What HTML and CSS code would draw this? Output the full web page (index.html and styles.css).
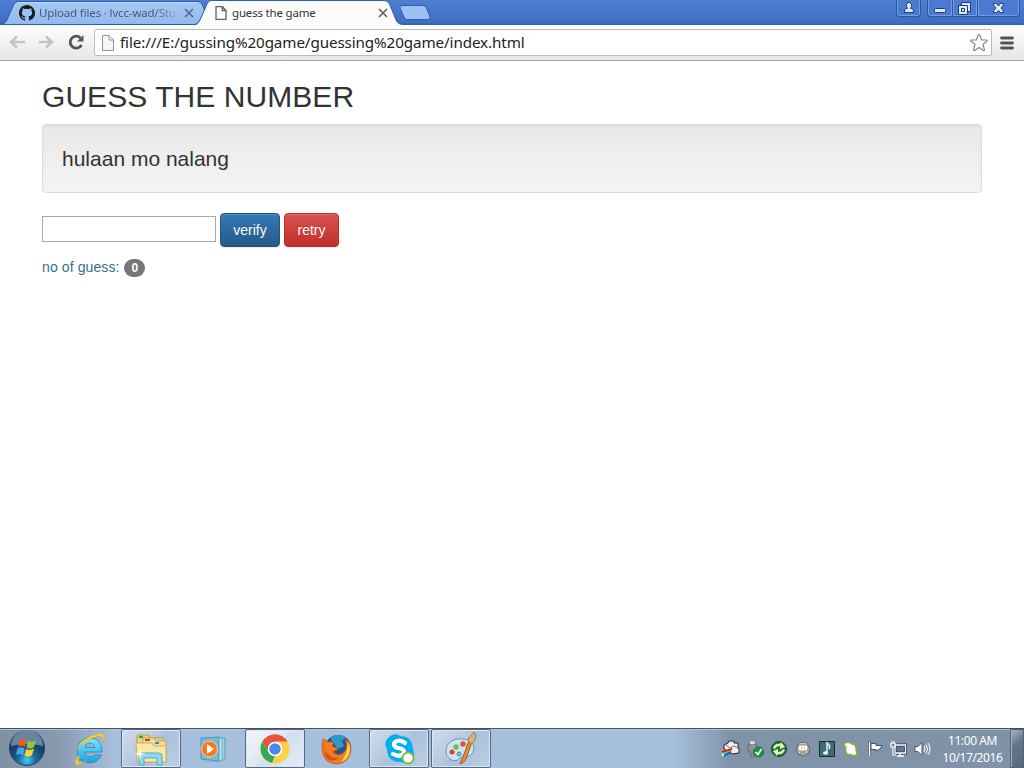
FILE: index.html
```html
<!DOCTYPE html>
<html lang="en">
<head>
<meta charset="utf-8">
<title>guess the game</title>
<link rel="stylesheet" href="styles.css">
</head>
<body>
<div class="desktop">
  <header class="tabstrip">
    <div class="tab tab-back">
      <svg class="tab-shape" width="208" height="25" viewBox="0 0 208 25"><defs><linearGradient id="tb" x2="0" y2="1"><stop stop-color="#a5c8f5"/><stop offset="1" stop-color="#92b9ed"/></linearGradient></defs><path d="M-3 24.500Q1 24 3 20L10 4Q11.500 1.500 14 1.500H194Q197 1.500 198 4L205 21Q206 24 208 24.500Z" fill="url(#tb)" stroke="#315ca9"/><path d="M14 2.500H194" stroke="#bfd9fa"/></svg>
      <svg class="favicon" width="16" height="16" viewBox="0 0 16 16"><path fill="#191b20" d="M8 0C3.580 0 0 3.580 0 8c0 3.540 2.290 6.530 5.470 7.590.4.070.55-.17.55-.38v-1.490c-2.230.48-2.700-.94-2.700-.94-.36-.92-.89-1.170-.89-1.170-.73-.5.050-.49.050-.49.810.060 1.230.83 1.230.83.710 1.230 1.870.87 2.330.66.070-.52.280-.87.500-1.070-1.780-.2-3.640-.89-3.640-3.950 0-.87.310-1.590.82-2.150-.08-.2-.36-1.020.08-2.120 0 0 .67-.21 2.200.82a7.600 7.600 0 0 1 4 0c1.530-1.040 2.200-.82 2.200-.82.440 1.100.16 1.920.08 2.120.51.560.82 1.270.82 2.150 0 3.070-1.870 3.750-3.650 3.950.29.250.54.730.54 1.480v2.200c0 .21.150.46.550.38A8 8 0 0 0 8 0Z"/></svg>
      <span class="tab-title faded">Upload files · lvcc-wad/Stu</span>
      <svg class="tab-close" width="10" height="10" viewBox="0 0 10 10"><path d="M1 1l8 8M9 1l-8 8" stroke="#586b89" stroke-width="1.700"/></svg>
    </div>
    <div class="tab tab-front">
      <svg class="tab-shape" width="206" height="26" viewBox="0 0 206 26"><path d="M-3 25.500Q1 24 2.500 20L9 4Q10.500.5 13 .5H186Q190 .5 191.500 4L198 20Q200 24.500 205 24.500V26H-3Z" fill="#fcfcfc"/><path d="M-3 24.500Q1 23 2.500 19L9 4Q10.500.5 13 .5H186Q190 .5 191.500 4L198 20Q200 24.500 205 24.500" fill="none" stroke="#315daf"/></svg>
      <svg class="page-icon" width="12" height="14" viewBox="0 0 12 14"><path d="M1 .7h6.500L11 4.500v8.800H1ZM7.300.7v4H11" fill="#fff" stroke="#606060" stroke-width="1.300"/></svg>
      <span class="tab-title front-title">guess the game</span>
      <svg class="tab-close" width="10" height="10" viewBox="0 0 10 10"><path d="M1 1l8 8M9 1l-8 8" stroke="#606060" stroke-width="1.700"/></svg>
    </div>
    <svg class="new-tab" width="32" height="17" viewBox="0 0 32 17"><path d="M3 1.500H24Q26.500 1.500 27.500 4L31 13Q31.500 15.500 29 15.500H8Q6 15.500 5 13L1 4Q0 1.500 3 1.500Z" fill="#9cc0f2" stroke="#315db0"/></svg>
    <svg class="window-buttons" width="126" height="18" viewBox="0 0 126 18">
      <g fill="#4b7bd0" stroke="#2c559f"><path d="M.5 0V14Q.5 16.500 3 16.500H22Q24.500 16.500 24.500 14V0"/><path d="M31.500 0V14Q31.500 16.500 34 16.500H120Q123.500 16.500 123.500 14V0M56.500 0V16M81.500 0V16"/></g>
      <g fill="none" stroke="#739ce1"><path d="M1.500 0V14L3 15.500H22L23.500 14V0M32.500 0V14L34 15.500H55.500V0M57.500 0V15.500H80.500V0M82.500 0V15.500H120L122.500 14V0"/></g>
      <g fill="#dbe8fc" stroke="#213d73"><path d="M10.500 6.500V4.500L12 2.500H14L15.500 4.500V6.500L14.500 8.500H15.500L17.500 10V12.500H8.500V10L10.500 8.500H11.500Z"/><rect x="38.500" y="8.500" width="11" height="4" rx="1"/><path d="M65.500 2.500H74.500V11.500H65.500Z"/><path fill-rule="evenodd" d="M62.500 5.500H71.500V14.500H62.500ZM65.500 8.500V11.500H68.500V8.500Z"/><path d="M97.500 3.500H100.500L102.500 6 104.500 3.500H107.500V5L105 8 107.500 11V12.500H104.500L102.500 10.500 100.500 12.500H97.500V11L100 8 97.500 5Z"/></g>
    </svg>
  </header>
  <nav class="toolbar">
    <svg class="nav-icons" width="77" height="20" viewBox="0 0 77 20"><g fill="none" stroke="#c3c3c3" stroke-width="2.500"><path d="M9 4.500L3 10L9 15.500M3 10H17"/><path d="M38 4.500L44 10L38 15.500M44 10H31"/></g><path d="M73.500 13A6 6 0 1 1 72.500 6" fill="none" stroke="#555" stroke-width="2.800"/><path d="M75.500 3V9.500H69Z" fill="#555"/></svg>
    <div class="address">
      <svg width="12" height="16" viewBox="0 0 12 16"><path d="M.5.5H7L11.500 5V15.500H.5ZM7 .5V5H11.500" fill="#f6f6f6" stroke="#929292"/></svg>
      <span class="url">file:///E:/gussing%20game/guessing%20game/index.html</span>
      <svg class="star" width="20" height="20" viewBox="0 0 20 20"><path d="M10 1.500Q10.700 1.500 11 2.500L12.600 7H17.300Q19 7.200 17.500 8.500L14 11.400 15.400 16.500Q15.500 18.200 14 17.300L10 14.500 6 17.300Q4.400 18.200 4.600 16.500L6 11.400 2.500 8.500Q1 7.200 2.700 7H7.400L9 2.500Q9.300 1.500 10 1.500Z" fill="#fff" stroke="#858585" stroke-width="1.200"/></svg>
    </div>
    <svg class="menu" width="14" height="14" viewBox="0 0 14 14"><path d="M1.500 2H12.500M1.500 7H12.500M1.500 12H12.500" stroke="#555" stroke-width="2.800" stroke-linecap="round"/></svg>
  </nav>
  <main class="page">
    <h2>GUESS THE NUMBER</h2>
    <div class="well">hulaan mo nalang</div>
    <div class="guess-form"><input class="guess" type="text" aria-label="guess"><button class="btn verify">verify</button><button class="btn retry">retry</button></div>
    <p class="count">no of guess: <span class="badge">0</span></p>
  </main>
  <footer class="taskbar">
    <div class="start"><svg width="38" height="38" viewBox="0 0 38 38"><defs><radialGradient id="orb" cy=".85"><stop stop-color="#43d4ed"/><stop offset=".5" stop-color="#176b9d"/><stop offset="1" stop-color="#183f69"/></radialGradient></defs><circle cx="19" cy="19" r="17.500" fill="url(#orb)" stroke="#27415f"/><path d="M3 17A16 16 0 0 1 35 17Q19 13 3 17Z" fill="#b9d3e3" opacity=".48"/><path d="M12 11Q15 8.500 18.500 11L17 18Q13.500 15.500 10 18Z" fill="#f15a27"/><path d="M20 11.500Q24 14 28 11L26 18Q22 21 18.500 18.500Z" fill="#91c73e"/><path d="M9.500 19.500Q13 17 16.500 19.500L15 26.500Q11.500 24 8 26Z" fill="#43a8e4"/><path d="M18 20Q22 22 26 19.500L24 26Q20 29 16.500 26.500Z" fill="#ffce38"/></svg></div>
    <div class="task ie"><svg width="34" height="34" viewBox="0 0 34 34"><defs><linearGradient id="ieb" x2="0" y2="1"><stop stop-color="#83e8ff"/><stop offset="1" stop-color="#199fdf"/></linearGradient></defs><path fill-rule="evenodd" d="M30 20H13Q13 25 18 25Q21 25 22.500 23H29.500Q26 31 17 31Q5 30 5 18.500Q6 6 18 6Q30 6 30 20ZM13 15.500H23Q22 11 17.800 11Q13.500 11 13 15.500Z" fill="url(#ieb)" stroke="#2589be" stroke-width=".8"/><path d="M6.500 24Q1 31 4.500 32.500Q9 33 14 29.500Q8 32 6 30Q5 28 8 24M3.500 18Q13 4 26 2Q35 0 30.500 11Q32 3 26 4Q14 7 3.500 18" fill="#ffd52e" stroke="#e3aa16" stroke-width=".6"/></svg></div>
    <div class="task framed"><svg width="36" height="34" viewBox="0 0 36 34"><path d="M4 5Q4 3 6 3H15L17 6H30V29H4Z" fill="#ecd27b" stroke="#b99948"/><path d="M10 6H21L23 9H33V30H10Z" fill="#f3df8c" stroke="#c6a853"/><path d="M6 5H10" stroke="#14ae4b" stroke-width="2"/><path d="M12 8H17" stroke="#dc3b29" stroke-width="2"/><path d="M22 11H26" stroke="#268fe0" stroke-width="2"/><path d="M3 11H19L21 14H33V30H4Z" fill="#f8e9a8" stroke="#cdb263"/><path d="M6 33V24Q6 21 9 21H26Q29 21 29 24V33H24V26H11V33Z" fill="#91d9ec" stroke="#4dacc5"/><path d="M7 16L8 21 13 22 8 23 7 28 6 23 1 22 6 21Z" fill="#fff"/></svg></div>
    <div class="task media"><svg width="32" height="30" viewBox="0 0 32 30"><path d="M10 4H28V26H10Z" fill="#9fd4e9" stroke="#539ebc"/><path d="M8 4H25V27H8Z" fill="#c4e9f4" stroke="#62a8c4"/><path d="M4 4L22 3V27L4 25Z" fill="#74bcd8" stroke="#4a94b7"/><circle cx="12.500" cy="15" r="8" fill="#f37a20" stroke="#ffcfa0"/><path d="M10 10L17 15L10 20Z" fill="#fff"/></svg></div>
    <div class="task framed bright"><svg width="30" height="30" viewBox="0 0 30 30"><circle cx="15" cy="15" r="14.500" fill="#ffd14b"/><path d="M2.500 7.500A14.500 14.500 0 0 1 27.500 7.500H15L9 18Z" fill="#e95040"/><path d="M2.500 7.500L9 18.500Q12 21 15 21.500L12 29A14.500 14.500 0 0 1 2.500 7.500Z" fill="#35a854"/><circle cx="15" cy="15" r="6.500" fill="#4889ed" stroke="#fff" stroke-width="1.500"/></svg></div>
    <div class="task firefox"><svg width="34" height="32" viewBox="0 0 34 32"><circle cx="18" cy="15" r="13" fill="#255687"/><path d="M10 5Q18-1 26 4L22 8 24 13 18 16Z" fill="#2f98cb"/><path d="M3 6Q6 7 8 9Q11 8 14 10L12 13 17 15Q19 17 14 18Q12 19 16 21Q21 23 25 18Q28 14 25 6Q31 10 31 17Q30 29 18 31Q3 31 2 16Q2 10 3 6Z" fill="#ee7c22" stroke="#c94a1a" stroke-width=".7"/><path d="M28 8Q32 16 28 24Q25 28 21 29Q28 20 28 8" fill="#ffd34a"/><path d="M4 9Q2 17 9 22Q13 26 19 25Q11 31 5 23" fill="#d84f1d"/></svg></div>
    <div class="task framed"><svg width="34" height="34" viewBox="0 0 34 34"><path d="M10 3Q15 1 18 4Q30 4 31 17Q34 25 27 30Q22 32 19 30Q5 30 5 17Q0 9 10 3Z" fill="#00aff0"/><path d="M23 11Q18 7 13 10Q10 14 16 16Q23 17 22 21Q18 26 11 22" fill="none" stroke="#fff" stroke-width="4.200" stroke-linecap="round"/><circle cx="26" cy="26" r="5.500" fill="#fff" stroke="#82b935" stroke-width="1.800"/></svg></div>
    <div class="task framed"><svg width="36" height="34" viewBox="0 0 36 34"><path d="M20 7Q31 8 31 17Q29 25 22 25Q20 23 17 26Q12 31 7 27Q2 23 3 19Q3 10 13 7Z" fill="#c9e6f5" stroke="#6799b7"/><circle cx="9" cy="20" r="2.500" fill="#d9413a"/><circle cx="13" cy="15" r="2.700" fill="#76b84d"/><circle cx="20" cy="12" r="2.700" fill="#e84f3c"/><circle cx="25" cy="14" r="2.700" fill="#ffc43a"/><circle cx="16" cy="22" r="2" fill="#9abcd1" stroke="#55839f"/><path d="M29 10L23 27Q20 32 17 32Q19 27 21 22L26 9Z" fill="#e98a32" stroke="#9b602f"/><path d="M25 7L31 0Q34 3 32 8L29 12L26 10Z" fill="#d2b485" stroke="#a87945"/></svg></div>
    <div class="tray">
      <svg width="18" height="18" viewBox="0 0 18 18"><path d="M2 5L6 3 7 1H12V3H16V8L17 9V13L10 14 2 9Z" fill="#eee" stroke="#222"/><path d="M4 5L8 8L12 6L16 8" fill="none" stroke="#777"/><path d="M0 11L10 8V10L4 16H0Z" fill="#fff"/><path d="M0 12L10 9" stroke="red" stroke-width="2"/><path d="M1 14L9 11" stroke="#27dc48" stroke-width="2"/><path d="M2 16L9 12" stroke="#164be9" stroke-width="2"/></svg>
      <svg width="18" height="18" viewBox="0 0 18 18"><path d="M4 1H9V5H11V11L8 13V17H5V13L2 11V5H4Z" fill="#8b9299" stroke="#626d79"/><path d="M4 1H9V4H4Z" fill="#d6dadd"/><circle cx="12.500" cy="12" r="5" fill="#159641" stroke="#2b6c3d"/><path d="M9.500 12L12 14.500L15.500 9" fill="none" stroke="#fff" stroke-width="1.700"/></svg>
      <svg width="18" height="18" viewBox="0 0 18 18"><circle cx="9" cy="9" r="7.500" fill="#237c32" stroke="#193f23"/><path d="M3 8Q5 3 10 4L11 2L15 7L10 9V6Q6 6 5 9ZM15 10Q13 15 8 14L7 16L3 11L8 9V12Q12 12 13 9Z" fill="#e3f3bd"/></svg>
      <svg width="18" height="18" viewBox="0 0 18 18"><circle cx="9" cy="9" r="6.500" fill="#eee" stroke="#77736b" stroke-width="1.500"/><path d="M4 6L6 3H12L14 6V12H4Z" fill="#d9c6a0"/><rect x="4" y="5" width="10" height="6" rx="2" fill="#fff" stroke="#817f79"/><path d="M7 8H8M10 8H11M6 13H12" stroke="#555"/></svg>
      <svg width="18" height="18" viewBox="0 0 18 18"><path d="M1.500 1.500H16.500V16.500H1.500Z" fill="#426a71" stroke="#162c34"/><path d="M9 14V3Q13 6 11 9" fill="none" stroke="#d8eef4" stroke-width="1.600"/><ellipse cx="7.500" cy="13" rx="2.500" ry="1.700" fill="#d8fff7"/></svg>
      <svg width="18" height="18" viewBox="0 0 18 18"><path d="M3 3Q7 1 10 4Q14 4 14 9L15 14Q13 17 10 15L5 14Q3 11 4 8L2 4Z" fill="#fff" stroke="#83b72d" stroke-width="1.500"/></svg>
      <svg width="18" height="18" viewBox="0 0 18 18"><path d="M3.500 1.500V16" stroke="#3e4853" stroke-width="3"/><path d="M3.500 2V16" stroke="#fff" stroke-width="1.500"/><path d="M5 3.500H10V5.500H16L14 9 10 11V9.500H5Z" fill="#fff" stroke="#465362"/></svg>
      <svg width="18" height="18" viewBox="0 0 18 18"><path d="M5 5H15.500V13H5Z" fill="#60778e" stroke="#303e4d" stroke-width="3"/><path d="M5 5H15.500V13H5ZM10 13V16M7 16H14" fill="none" stroke="#fff" stroke-width="1.300"/><path d="M1 3V7H5V3M3 7V10V15H6M2 1V4M4 1V4" fill="none" stroke="#fff" stroke-width="1.200"/></svg>
      <svg width="18" height="18" viewBox="0 0 18 18"><path d="M1 6.500H4L8 2.500V15.500L4 11.500H1Z" fill="#fff" stroke="#4c5967"/><path d="M10 6Q12 9 10 12M12 4.500Q15 9 12 13.500M14 3Q18 9 14 15" fill="none" stroke="#fff"/></svg>
    </div>
    <div class="clock"><span>11:00 AM</span><span class="date">10/17/2016</span></div>
    <div class="show-desktop"></div>
  </footer>
</div>
</body>
</html>
```
FILE: styles.css
```css
* { box-sizing: border-box; }
body { margin: 0; overflow: hidden; }
svg { display: block; flex: none; }
.desktop { width: 1024px; height: 768px; display: flex; flex-direction: column; background: #fff; font-family: "Liberation Sans", Arial, sans-serif; }
.tabstrip { height: 25px; flex: none; display: flex; padding-left: 4px; background: linear-gradient(#4e7fd3, #406dc4 90%, #315baa); font-family: "Noto Sans", sans-serif; }
.tab { position: relative; height: 25px; display: flex; align-items: center; flex: none; }
.tab-shape { position: absolute; left: 0; top: 0; overflow: visible; }
.tab-back { width: 194px; padding: 1px 4px 0 15px; }
.tab-front { width: 202px; padding: 1px 10px 0 17px; z-index: 1; }
.favicon, .page-icon, .tab-title, .tab-close { position: relative; }
.tab-title { font-size: 11.500px; line-height: 16px; white-space: nowrap; color: #4b5a70; }
.faded { width: 142px; margin-left: 4px; letter-spacing: -.15px; mask-image: linear-gradient(90deg, #000 82%, rgba(0,0,0,.1)); }
.front-title { margin-left: 5px; width: 144px; color: #333; letter-spacing: -.18px; }
.tab-back .tab-close { margin-left: 5px; }
.tab-front .tab-close { margin-left: 2px; }
.new-tab { margin: 4px 0 0 -1px; }
.window-buttons { margin: 0 2px 0 auto; }
.toolbar { height: 36px; flex: none; display: flex; align-items: center; background: linear-gradient(#fdfdfd, #e7e7e7); border-bottom: 1px solid #a5a5a5; padding-left: 8px; }
.nav-icons { margin-top: -1px; }
.address { width: 898px; height: 27px; margin-left: 9px; display: flex; align-items: center; border: 1px solid #bcbcbc; border-radius: 2px; background: #fff; padding: 0 2px 0 7px; }
.url { margin: -2px 0 0 6px; font: 15.200px "Noto Sans", sans-serif; line-height: 24px; letter-spacing: -.1px; color: #222; white-space: nowrap; }
.star { margin-left: auto; }
.menu { margin-left: 8px; }
.page { flex: 1; padding: 19px 42px 0; color: #333; }
h2 { margin: 0 0 10px; font-size: 30px; font-weight: 400; line-height: 34px; letter-spacing: .06px; }
.well { height: 69px; margin-bottom: 20px; padding: 19px; border: 1px solid #dcdcdc; border-radius: 4px; background: linear-gradient(#e8e8e8, #f5f5f5); box-shadow: inset 0 1px 3px rgba(0,0,0,.05), 0 1px 0 rgba(255,255,255,.1); font-size: 21px; line-height: 30px; }
.guess-form { display: flex; align-items: center; gap: 4px; }
.guess { width: 174px; height: 26px; margin-bottom: 2px; padding: 1px; border: 1px solid #a9a9a9; border-radius: 0; background: #fff; }
.btn { height: 34px; padding: 6px 12px; border: 1px solid #245580; border-radius: 4px; background: linear-gradient(#337ab7, #265a88); color: #fff; font: 14px/20px "Liberation Sans", Arial, sans-serif; text-shadow: 0 -1px 0 rgba(0,0,0,.2); box-shadow: inset 0 1px 0 rgba(255,255,255,.15), 0 1px 1px rgba(0,0,0,.075); }
.verify { width: 60px; }
.retry { width: 55px; border-color: #b92c28; background: linear-gradient(#d9534f, #c12e2a); }
.count { margin: 10px 0 0; color: #31708f; font-size: 14px; line-height: 20px; letter-spacing: .1px; }
.badge { display: inline-block; min-width: 10px; margin-left: 1px; padding: 3px 7px; border-radius: 10px; background: #777; color: #fff; font-size: 12px; font-weight: 700; line-height: 12px; letter-spacing: 0; vertical-align: middle; }
.taskbar { height: 40px; flex: none; display: flex; border-top: 1px solid #454f5b; background: linear-gradient(90deg, #8191a5 0, #8798af 55px, #a6bfdc 115px, #a6bfdc 675px, #8193a8 730px, #8092a7); box-shadow: inset 0 1px #b5c7dc; }
.start { width: 59px; padding-left: 8px; }
.task { width: 60px; margin-right: 2px; height: 39px; display: flex; align-items: center; justify-content: center; }
.framed { border: 1px solid #56687f; border-radius: 2px; background: linear-gradient(135deg, #d0dcea, #b4c8df 45%, #abc1da 50%, #bbcee3); box-shadow: inset 0 0 0 1px #dce7f4; }
.bright { background: linear-gradient(135deg, #f4f7fb, #dce6f1 48%, #d1deec 50%, #e5edf6); }
.tray { margin: 0 2px 0 auto; display: flex; align-items: center; gap: 6px; }
.clock { width: 76px; height: 39px; display: flex; flex-direction: column; align-items: center; padding: 3px 0 0 1px; color: #fff; font: 12px/17px "Noto Sans", sans-serif; letter-spacing: -.4px; white-space: nowrap; }
.show-desktop { width: 14px; border: 1px solid #536174; background: linear-gradient(145deg, #a9b3bf, #63758b 40%, #56687d); box-shadow: inset 1px 0 #a3b1c1; }
```
